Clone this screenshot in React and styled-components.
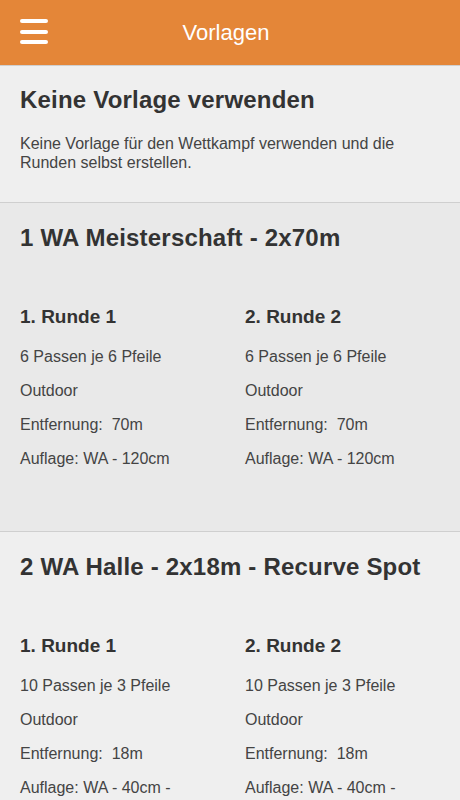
import React from 'react';
import styled, { createGlobalStyle } from 'styled-components';

const GlobalStyle = createGlobalStyle`
  html, body {
    margin: 0;
    padding: 0;
    background: #efefef;
    font-family: "Liberation Sans", Arial, sans-serif;
  }
`;

const Page = styled.div`
  width: 460px;
  height: 800px;
  overflow: hidden;
  background: #efefef;
`;

const Header = styled.header`
  height: 65px;
  background: #e48638;
  display: flex;
  align-items: center;
  justify-content: center;
  position: relative;
  border-bottom: 1px solid #cfcfcf;
`;

const MenuButton = styled.button`
  position: absolute;
  left: 20px;
  top: 19px;
  width: 28px;
  height: 25px;
  padding: 0;
  border: none;
  background: transparent;
  display: flex;
  flex-direction: column;
  justify-content: space-between;
`;

const MenuLine = styled.span`
  display: block;
  height: 4px;
  width: 28px;
  border-radius: 2px;
  background: #fff;
`;

const Title = styled.h1`
  margin: 0 8px 0 0;
  color: #fff;
  font-size: 22px;
  font-weight: 400;
`;

const Section = styled.section`
  background: ${p => (p.active ? '#e9e9e9' : '#efefef')};
  border-bottom: 1px solid #cfcfcf;
  padding: ${p => p.pad};
`;

const SectionTitle = styled.h2`
  margin: 0 20px;
  font-size: 24px;
  line-height: 26px;
  font-weight: 700;
  letter-spacing: 0.2px;
  color: #333;
`;

const Description = styled.p`
  margin: 21px 20px 0;
  font-size: 16px;
  line-height: 19px;
  color: #444;
`;

const Rounds = styled.div`
  display: grid;
  grid-template-columns: 1fr 1fr;
  padding: 0 5px;
  margin-top: 55px;
`;

const Round = styled.div`
  padding: 0 15px;
`;

const RoundTitle = styled.h3`
  margin: 0 0 19px;
  font-size: 19px;
  line-height: 22px;
  font-weight: 700;
  color: #333;
`;

const Line = styled.p`
  margin: 0 0 14px;
  font-size: 16px;
  line-height: 20px;
  color: #444;
  white-space: nowrap;
`;

const templates = [
  {
    name: '1 WA Meisterschaft - 2x70m',
    active: true,
    ends: '6 Passen je 6 Pfeile',
    distance: '70m',
    target: 'WA - 120cm',
  },
  {
    name: '2 WA Halle - 2x18m - Recurve Spot',
    active: false,
    ends: '10 Passen je 3 Pfeile',
    distance: '18m',
    target: 'WA - 40cm -',
  },
];

export default function App() {
  return (
    <Page>
      <GlobalStyle />
      <Header>
        <MenuButton aria-label="Menü">
          <MenuLine />
          <MenuLine />
          <MenuLine />
        </MenuButton>
        <Title>Vorlagen</Title>
      </Header>
      <Section pad="21px 0 30px">
        <SectionTitle>Keine Vorlage verwenden</SectionTitle>
        <Description>
          Keine Vorlage für den Wettkampf verwenden und die Runden selbst erstellen.
        </Description>
      </Section>
      {templates.map(t => (
        <Section key={t.name} active={t.active} pad="22px 0 48px">
          <SectionTitle>{t.name}</SectionTitle>
          <Rounds>
            {[1, 2].map(n => (
              <Round key={n}>
                <RoundTitle>{n}. Runde {n}</RoundTitle>
                <Line>{t.ends}</Line>
                <Line>Outdoor</Line>
                <Line>Entfernung:&nbsp; {t.distance}</Line>
                <Line>Auflage: {t.target}</Line>
              </Round>
            ))}
          </Rounds>
        </Section>
      ))}
    </Page>
  );
}
